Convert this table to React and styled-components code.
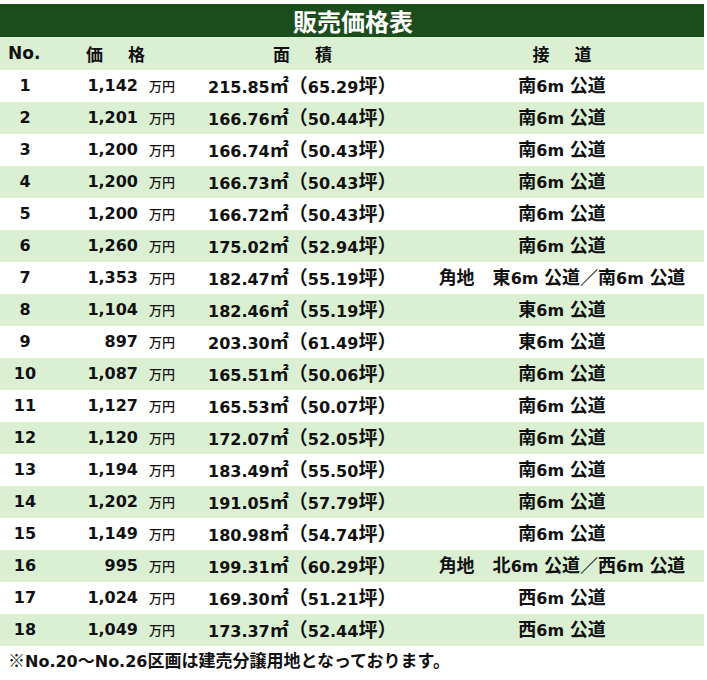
import React from 'react';
import styled, {createGlobalStyle} from 'styled-components';

const colors = {
    dark: '#1b4e1c',
    light: '#dbf0d3',
    white: '#ffffff',
    text: '#111111',
};

const GlobalStyle = createGlobalStyle`
    body {
        margin: 0;
        background: ${colors.white};
        font-family: "DejaVu Sans", "Noto Sans CJK JP", sans-serif;
        color: ${colors.text};
    }
`;

const Page = styled.div`
    width: 707px;
    padding-top: 4px;
`;

const Table = styled.div`
    width: 704px;
`;

const Title = styled.div`
    height: 33px;
    background: ${colors.dark};
    color: ${colors.white};
    font-family: "Noto Sans CJK JP", sans-serif;
    font-weight: 700;
    font-size: 24px;
    display: flex;
    align-items: center;
    justify-content: center;
    padding-left: 2px;
`;

const Row = styled.div`
    display: grid;
    grid-template-columns: 50px 150px 220px 1fr;
    height: ${p => p.$head ? 33 : 32}px;
    align-items: center;
    background: ${p => p.$shade ? colors.light : colors.white};
    font-weight: 700;
    font-size: 16px;
    line-height: 1.2;
`;

const HeadCell = styled.div`
    display: flex;
    gap: 25px;
    justify-content: ${p => p.$align || 'center'};
    padding-left: ${p => p.$pad || 0}px;
    font-family: "Noto Sans CJK JP", sans-serif;
    font-size: 17px;
    line-height: 1;
`;

const NoHead = styled.div`
    padding-left: 8px;
    font-size: 17px;
`;

const NoCell = styled.div`
    text-align: center;
`;

const PriceCell = styled.div`
    display: flex;
    align-items: baseline;
    justify-content: flex-end;
    gap: 11px;
    padding-right: 25px;
`;

const Unit = styled.span`
    font-family: "Noto Sans CJK JP", sans-serif;
    font-size: 13px;
    font-weight: 500;
`;

const AreaCell = styled.div`
    padding-left: 8px;
    white-space: nowrap;
`;

const RoadCell = styled.div`
    text-align: center;
    white-space: nowrap;
`;

const Cjk = styled.span`
    font-family: "Noto Sans CJK JP", sans-serif;
    font-size: ${p => p.$size || 18}px;
    line-height: 1;
`;

const Note = styled.div`
    padding: 5px 0 0 8px;
    font-weight: 700;
    font-size: 16px;
    line-height: 1.2;
    white-space: nowrap;
`;

// wraps the full-width runs of a string so they get the larger CJK size
const Mixed = ({text, size}) =>
    text.split(/([^\x00-\x7f]+)/).filter(Boolean).map((part, i) =>
        /[^\x00-\x7f]/.test(part) ? <Cjk key={i} $size={size}>{part}</Cjk> : part
    );

const rows = [
    [1, '1,142', '215.85', '65.29', '南6m 公道'],
    [2, '1,201', '166.76', '50.44', '南6m 公道'],
    [3, '1,200', '166.74', '50.43', '南6m 公道'],
    [4, '1,200', '166.73', '50.43', '南6m 公道'],
    [5, '1,200', '166.72', '50.43', '南6m 公道'],
    [6, '1,260', '175.02', '52.94', '南6m 公道'],
    [7, '1,353', '182.47', '55.19', '角地　東6m 公道／南6m 公道'],
    [8, '1,104', '182.46', '55.19', '東6m 公道'],
    [9, '897', '203.30', '61.49', '東6m 公道'],
    [10, '1,087', '165.51', '50.06', '南6m 公道'],
    [11, '1,127', '165.53', '50.07', '南6m 公道'],
    [12, '1,120', '172.07', '52.05', '南6m 公道'],
    [13, '1,194', '183.49', '55.50', '南6m 公道'],
    [14, '1,202', '191.05', '57.79', '南6m 公道'],
    [15, '1,149', '180.98', '54.74', '南6m 公道'],
    [16, '995', '199.31', '60.29', '角地　北6m 公道／西6m 公道'],
    [17, '1,024', '169.30', '51.21', '西6m 公道'],
    [18, '1,049', '173.37', '52.44', '西6m 公道'],
];

export default function App() {
    return (
        <Page>
            <GlobalStyle/>
            <Table>
                <Title>販売価格表</Title>
                <Row $head $shade>
                    <NoHead>No.</NoHead>
                    <HeadCell $align='flex-start' $pad={36}><span>価</span><span>格</span></HeadCell>
                    <HeadCell $align='flex-start' $pad={73}><span>面</span><span>積</span></HeadCell>
                    <HeadCell><span>接</span><span>道</span></HeadCell>
                </Row>
                {rows.map(([no, price, m2, tsubo, road], i) => (
                    <Row key={no} $shade={i % 2 === 1}>
                        <NoCell>{no}</NoCell>
                        <PriceCell><span>{price}</span><Unit>万円</Unit></PriceCell>
                        <AreaCell>
                            {m2}<Cjk $size={19}>㎡（</Cjk>{tsubo}<Cjk $size={19}>坪）</Cjk>
                        </AreaCell>
                        <RoadCell><Mixed text={road}/></RoadCell>
                    </Row>
                ))}
            </Table>
            <Note><Mixed text='※No.20～No.26区画は建売分譲用地となっております。' size={17}/></Note>
        </Page>
    );
}
